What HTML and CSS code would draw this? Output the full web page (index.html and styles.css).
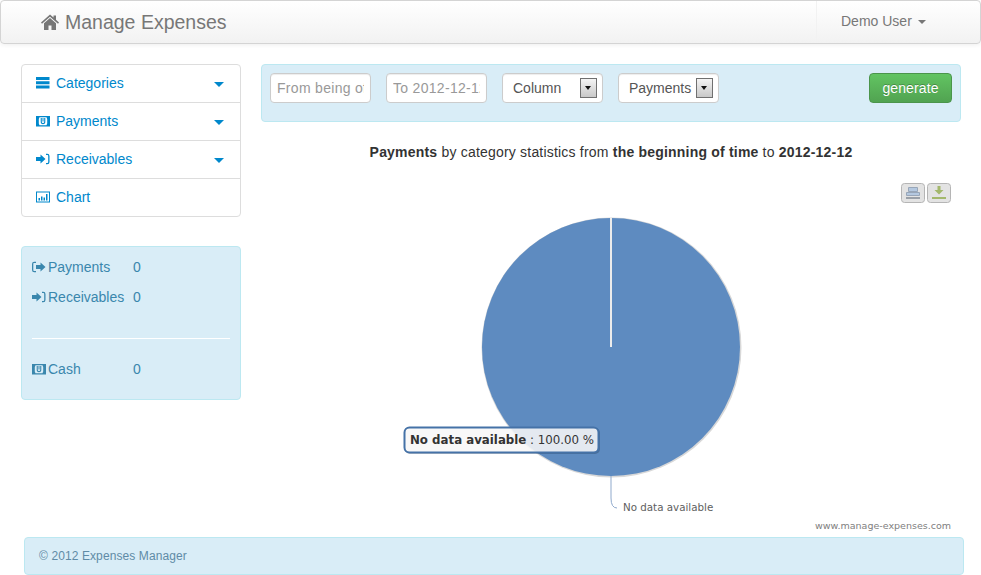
FILE: index.html
```html
<!DOCTYPE html>
<html lang="en">
<head>
    <meta charset="UTF-8" />
    <meta name="viewport" content="width=device-width, initial-scale=1" />
    <title>Manage Expenses</title>
    <link rel="stylesheet" href="styles.css">
</head>
<body>
    <svg class="icon_defs" width="0" height="0" aria-hidden="true">
        <symbol id="i_list" viewBox="0 0 14 14">
            <path d="M0 1h13.500v3H0zM0 5.200h13.500v3H0zM0 9.400h13.500v3H0z"/>
        </symbol>
        <symbol id="i_money" viewBox="0 0 14 14">
            <path fill-rule="evenodd" d="M0 2h14v10.500H0zM3.500 3.200 2.800 5v4.500l.7 1.800h7l.7-1.800V5l-.7-1.800z"/>
            <path d="M4.700 4h1.100v3.800c0 1.600 2.400 1.600 2.400 0V4h1.100v3.900c0 3-4.600 3-4.600 0zM6.500 4h1v3.500h-1z"/>
        </symbol>
        <symbol id="i_in" viewBox="0 0 14 14">
            <path d="M0 5h4.500V2.500L9.500 7l-5 4.500V9H0zM10 1.800h1.200A2.300 2.300 0 0 1 13.500 4.100v5.800a2.300 2.300 0 0 1-2.300 2.300H10v-1.300h1.200c.6 0 1-.4 1-1V4.100c0-.6-.4-1-1-1H10z"/>
        </symbol>
        <symbol id="i_out" viewBox="0 0 14 14">
            <path d="M4 1.800H2.300A2.300 2.300 0 0 0 0 4.100v5.800a2.300 2.300 0 0 0 2.300 2.300H4v-1.300H2.300c-.6 0-1-.4-1-1V4.100c0-.6.4-1 1-1H4zM4 5h4.500V2.500L13.500 7l-5 4.500V9H4z"/>
        </symbol>
        <symbol id="i_chart" viewBox="0 0 14 14">
            <path fill-rule="evenodd" d="M0 1.500h14v11H0zM1 2.500v9h12v-9zM2.500 8h1.500v2.500H2.500zM5 6.500h1.500v4H5zM7.500 7.500H9v3H7.500zM10 4h1.500v6.500H10z"/>
        </symbol>
    </svg>

    <header class="navbar">
        <a class="brand" href="#">
            <svg class="brand_icon" viewBox="0 0 18 16" fill="currentColor" aria-hidden="true">
                <path d="M9 .5 0 8.500l1 1.200L9 2.700l8 7 1-1.200-3-2.700V1.500h-2.500v2.100z"/>
                <path d="M9 4 3 9.300V16h4.500v-4.500h3V16H15V9.300z"/>
            </svg>
            Manage Expenses
        </a>
        <a class="user_menu" href="#">Demo User <span class="caret caret_grey"></span></a>
    </header>

    <div class="content">
        <aside class="sidebar">
            <ul class="side_nav">
                <li><a href="#"><svg class="icon"><use href="#i_list"/></svg>Categories<span class="caret"></span></a></li>
                <li><a href="#"><svg class="icon"><use href="#i_money"/></svg>Payments<span class="caret"></span></a></li>
                <li><a href="#"><svg class="icon"><use href="#i_in"/></svg>Receivables<span class="caret"></span></a></li>
                <li><a href="#"><svg class="icon"><use href="#i_chart"/></svg>Chart</a></li>
            </ul>

            <div class="well totals">
                <div class="total_row"><span class="total_name"><svg class="icon"><use href="#i_out"/></svg>Payments</span><span>0</span></div>
                <div class="total_row"><span class="total_name"><svg class="icon"><use href="#i_in"/></svg>Receivables</span><span>0</span></div>
                <hr class="total_line">
                <div class="total_row"><span class="total_name"><svg class="icon"><use href="#i_money"/></svg>Cash</span><span>0</span></div>
            </div>
        </aside>

        <main class="main">
            <form class="well filter" action="">
                <input class="field" type="text" placeholder="From being of time">
                <input class="field" type="text" placeholder="To 2012-12-12">
                <div class="field pick">Column<span class="pick_btn"></span></div>
                <div class="field pick">Payments<span class="pick_btn"></span></div>
                <button class="btn_generate" type="button">generate</button>
            </form>

            <h2 class="chart_title"><b>Payments</b> by category statistics from <b>the beginning of time</b> to <b>2012-12-12</b></h2>

            <!-- viewBox uses page coordinates so the chart numbers are easy to check -->
            <svg class="chart" viewBox="261 165 700 372" width="700" height="372">
                <g class="export_btn">
                    <rect x="901.500" y="183.500" width="23" height="19" rx="3"/>
                    <rect x="927.500" y="183.500" width="23" height="19" rx="3"/>
                    <path fill="#b4c8e0" stroke="#98a6b8" d="M908.500 187.500h9v4h-9zM906.500 192.500h13v3h-13z"/>
                    <path fill="#9aa0a8" d="M906 197h14v2h-14z"/>
                    <path fill="#a3b86c" d="M937.500 186h3v4h3l-4.500 4.500-4.500-4.500h3zM932 197h14v2h-14z"/>
                </g>

                <circle class="pie_shadow" cx="611.500" cy="347.500" r="130"/>
                <circle class="pie" cx="611" cy="347" r="129"/>
                <path class="pie_edge" d="M611 218v129"/>

                <path class="connector" d="M611 476v22q0 10 6 10"/>
                <text class="pie_label" x="623" y="511">No data available</text>

                <rect class="tip_shadow" x="405" y="428" width="195" height="26" rx="5"/>
                <rect class="tip" x="404.500" y="427.500" width="194" height="25" rx="5"/>
                <text class="tip_text" x="410" y="444"><tspan class="tip_name">No data available</tspan> : 100.00 %</text>

                <text class="credit" x="951" y="529">www.manage-expenses.com</text>
            </svg>
        </main>
    </div>

    <footer class="well footer">© 2012 Expenses Manager</footer>
</body>
</html>
```

FILE: styles.css
```css
* {
    box-sizing: border-box;
}

body {
    margin: 0;
    font-family: 'Liberation Sans', Arial, sans-serif;
    font-size: 14px;
    line-height: 20px;
    color: #333;
    background: #fff;
}

a {
    text-decoration: none;
}

.icon_defs {
    position: absolute;
}

.icon {
    width: 14px;
    height: 14px;
    fill: currentColor;
    flex: none;
}

.caret {
    width: 0;
    height: 0;
    border-left: 5px solid transparent;
    border-right: 5px solid transparent;
    border-top: 5px solid #0088cc;
}

.caret_grey {
    display: inline-block;
    margin-left: 2px;
    vertical-align: 2px;
    border-left-width: 4px;
    border-right-width: 4px;
    border-top: 4px solid #777;
}

.navbar {
    display: flex;
    justify-content: space-between;
    height: 44px;
    background: linear-gradient(#ffffff, #f2f2f2);
    border: 1px solid #d4d4d4;
    border-radius: 4px;
    box-shadow: 0 1px 4px rgba(0, 0, 0, 0.065);
}

.brand {
    display: flex;
    align-items: center;
    gap: 6px;
    padding-left: 40px;
    font-size: 19.500px;
    color: #777;
}

.brand_icon {
    width: 18px;
    height: 16px;
}

.user_menu {
    width: 164px;
    padding: 10px 0 0 24px;
    color: #777;
    border-left: 1px solid #f2f2f2;
}

.content {
    display: flex;
    gap: 20px;
    padding: 20px 20px 0 21px;
}

.sidebar {
    width: 220px;
    flex: none;
}

.side_nav {
    margin: 0 0 29px;
    padding: 0;
    list-style: none;
    background: #fff;
    border: 1px solid #ddd;
    border-radius: 4px;
}

.side_nav li + li {
    border-top: 1px solid #ddd;
}

.side_nav a {
    display: flex;
    align-items: center;
    height: 37px;
    padding: 0 16px 2px 14px;
    color: #0088cc;
}

.side_nav .icon {
    margin-right: 6px;
}

.side_nav .caret {
    margin-left: auto;
    margin-top: 3px;
}

.well {
    background: #d9edf7;
    border: 1px solid #bce8f1;
    border-radius: 4px;
}

.totals {
    height: 154px;
    padding: 10px;
    color: #3a87ad;
}

.total_row {
    display: flex;
    align-items: center;
    height: 20px;
    margin-bottom: 10px;
}

.total_name {
    display: flex;
    align-items: center;
    width: 101px;
}

.total_name .icon {
    margin-right: 2px;
}

.total_line {
    margin: 31px 0 20px;
    border: 0;
    border-top: 1px solid #fff;
}

.main {
    width: 700px;
    flex: none;
}

.filter {
    display: flex;
    align-items: flex-start;
    gap: 15px;
    height: 58px;
    padding: 8px 8px;
}

.field {
    width: 101px;
    height: 30px;
    padding: 4px 6px;
    font: 14px/20px 'Liberation Sans', Arial, sans-serif;
    color: #555;
    background: #fff;
    border: 1px solid #ccc;
    border-radius: 4px;
    box-shadow: inset 0 1px 1px rgba(0, 0, 0, 0.075);
}

.field::placeholder {
    color: #999;
    letter-spacing: 0.3px;
}

.pick {
    display: flex;
    align-items: center;
    justify-content: space-between;
    padding: 0 5px 0 10px;
}

.pick_btn {
    position: relative;
    width: 17px;
    height: 20px;
    background: linear-gradient(#f4f4f4, #c8c8c8);
    border: 1px solid #707070;
    flex: none;
}

.pick_btn::after {
    content: "";
    position: absolute;
    top: 7px;
    left: 4px;
    border-left: 3.500px solid transparent;
    border-right: 3.500px solid transparent;
    border-top: 4px solid #111;
}

.btn_generate {
    width: 83px;
    height: 30px;
    margin-left: auto;
    padding: 0;
    font: 14px 'Liberation Sans', Arial, sans-serif;
    letter-spacing: 0.1px;
    color: #fff;
    text-shadow: 0 -1px 0 rgba(0, 0, 0, 0.25);
    background: linear-gradient(#62c462, #51a351);
    border: 1px solid #4b954b;
    border-radius: 4px;
}

.chart_title {
    margin: 20px 0 0;
    font-size: 14px;
    font-weight: normal;
    line-height: 20px;
    text-align: center;
    letter-spacing: 0.2px;
    color: #333;
}

.chart {
    display: block;
    margin-top: 3px;
}

.export_btn rect {
    fill: #e3e3e3;
    stroke: #b5b5b5;
}

.pie {
    fill: #5e8bc0;
}

.pie_shadow {
    fill: #d8d8d8;
}

.pie_edge {
    stroke: #ececec;
    stroke-width: 2;
}

.connector {
    fill: none;
    stroke: #8fa9cc;
}

.pie_label {
    font: 10.300px 'DejaVu Sans', sans-serif;
    fill: #606060;
}

.tip_shadow {
    fill: rgba(0, 0, 0, 0.2);
}

.tip {
    fill: rgba(255, 255, 255, 0.85);
    stroke: #4572a7;
    stroke-width: 2;
}

.tip_text {
    font: 11.800px 'DejaVu Sans', sans-serif;
    fill: #333;
}

.tip_name {
    font-weight: bold;
}

.credit {
    font: 9.500px 'DejaVu Sans', sans-serif;
    fill: #808080;
    text-anchor: end;
}

.footer {
    height: 38px;
    margin: 0 17px 0 24px;
    padding: 8px 14px;
    font-size: 12px;
    letter-spacing: 0.1px;
    color: #5f8ba6;
}
```
